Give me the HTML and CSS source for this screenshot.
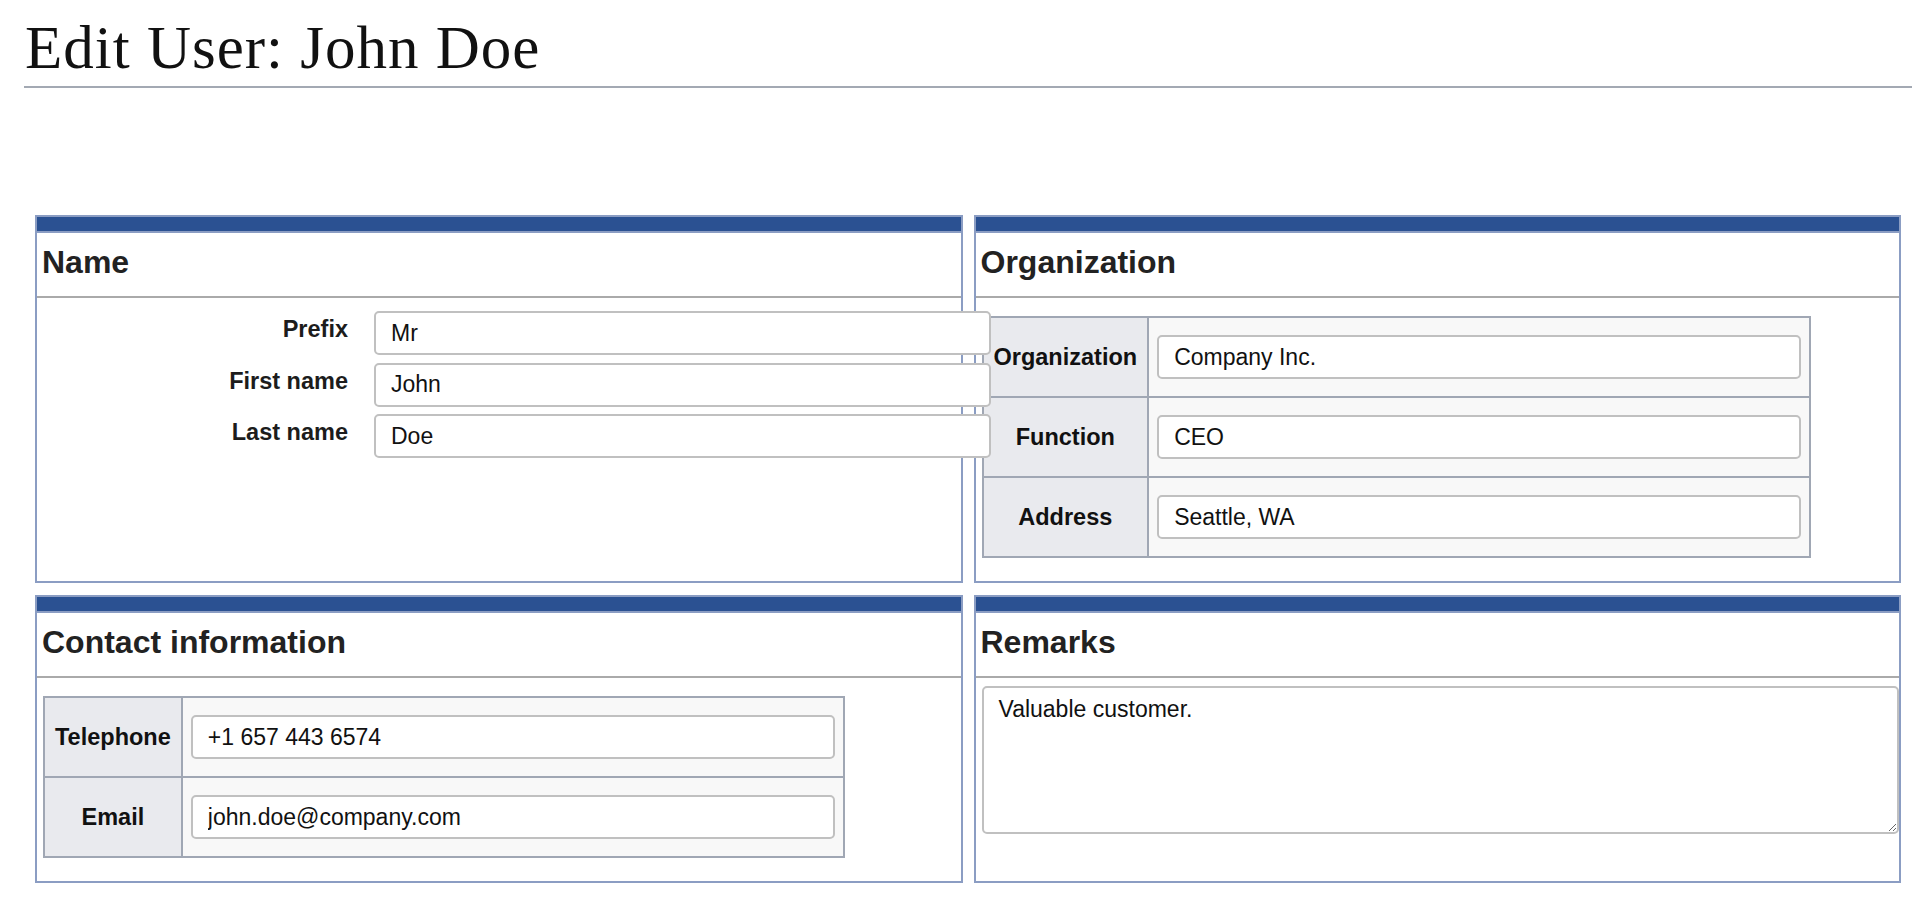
FILE: index.html
```html
<!DOCTYPE html>
<html lang="en">
<head>
<meta charset="utf-8">
<title>Edit User: John Doe</title>
<link rel="stylesheet" href="styles.css">
</head>
<body>
<div class="page">
  <h1 class="page-title">Edit User: John Doe</h1>
  <div class="panels">
    <section class="panel panel-name">
      <div class="panel-bar"></div>
      <h2 class="panel-title">Name</h2>
      <div class="panel-body panel-body-name">
        <div class="name-form">
          <label class="name-label">Prefix</label>
          <input class="field field-name" type="text" value="Mr">
          <label class="name-label">First name</label>
          <input class="field field-name" type="text" value="John">
          <label class="name-label">Last name</label>
          <input class="field field-name" type="text" value="Doe">
        </div>
      </div>
    </section>
    <section class="panel">
      <div class="panel-bar"></div>
      <h2 class="panel-title">Organization</h2>
      <div class="panel-body">
        <table class="info-table">
          <tr><th>Organization</th><td><input class="field field-wide" type="text" value="Company Inc."></td></tr>
          <tr><th>Function</th><td><input class="field field-wide" type="text" value="CEO"></td></tr>
          <tr><th>Address</th><td><input class="field field-wide" type="text" value="Seattle, WA"></td></tr>
        </table>
      </div>
    </section>
    <section class="panel">
      <div class="panel-bar"></div>
      <h2 class="panel-title">Contact information</h2>
      <div class="panel-body">
        <table class="info-table">
          <tr><th>Telephone</th><td><input class="field field-wide" type="text" value="+1 657 443 6574"></td></tr>
          <tr><th>Email</th><td><input class="field field-wide" type="text" value="john.doe@company.com"></td></tr>
        </table>
      </div>
    </section>
    <section class="panel">
      <div class="panel-bar"></div>
      <h2 class="panel-title">Remarks</h2>
      <div class="panel-body panel-body-remarks">
        <textarea class="remarks">Valuable customer.</textarea>
      </div>
    </section>
  </div>
</div>
</body>
</html>
```
FILE: styles.css
```css
html, body {
  margin: 0;
  padding: 0;
  background: #ffffff;
}

.page {
  padding: 0 16px 0 24px;
}

.page-title {
  margin: 13px 0 0;
  padding: 0 0 3px 1px;
  font-family: "Liberation Serif", "Times New Roman", serif;
  font-weight: 400;
  font-size: 61px;
  line-height: 70px;
  letter-spacing: 1px;
  color: #111111;
  border-bottom: 2px solid #a3a9b3;
}

.panels {
  display: grid;
  grid-template-columns: 1fr 1fr;
  column-gap: 11px;
  row-gap: 12px;
  margin: 127px 11px 0;
}

.panel {
  display: flex;
  flex-direction: column;
  min-width: 0;
  border: 2px solid #8b9dc3;
  background: #ffffff;
}

.panel-name {
  z-index: 1;
}

.panel-bar {
  height: 14px;
  background: #2b5192;
  border-bottom: 2px solid #8b9dc3;
}

.panel-title {
  margin: 0;
  height: 58px;
  padding: 0 0 5px 5px;
  font-family: "Liberation Sans", Arial, sans-serif;
  font-weight: 700;
  font-size: 32px;
  line-height: 58px;
  color: #222222;
  border-bottom: 2px solid #aaaaaa;
}

.panel-body {
  padding: 18px 0 23px 6px;
}

.panel-body-name {
  padding-top: 13px;
}

.panel-body-remarks {
  padding-top: 8px;
  padding-bottom: 0;
}

.name-form {
  display: grid;
  grid-template-columns: 305px 617px;
  column-gap: 26px;
  row-gap: 7.7px;
  align-items: start;
}

.name-label {
  padding-top: 5px;
  text-align: right;
  font-family: "Liberation Sans", Arial, sans-serif;
  font-weight: 700;
  font-size: 23.5px;
  color: #1c1c1c;
}

.field {
  display: block;
  box-sizing: border-box;
  height: 44px;
  margin: 0;
  padding: 0 15px;
  border: 2px solid #c0c0c0;
  border-radius: 5px;
  background: #ffffff;
  font-family: "Liberation Sans", Arial, sans-serif;
  font-size: 23px;
  color: #111111;
  outline: none;
}

.field-name {
  width: 617px;
}

.field-wide {
  width: 644px;
}

.info-table {
  border-collapse: collapse;
  border: 2px solid #a0a7b4;
}

.info-table th,
.info-table td {
  border: 2px solid #a0a7b4;
}

.info-table th {
  padding: 0 10px;
  background: #e9eaee;
  text-align: center;
  vertical-align: middle;
  font-family: "Liberation Sans", Arial, sans-serif;
  font-weight: 700;
  font-size: 23.5px;
  color: #111111;
}

.info-table td {
  padding: 17px 8px;
  background: #f8f8f8;
}

.remarks {
  display: block;
  box-sizing: border-box;
  width: 100%;
  height: 148px;
  margin: 0;
  padding: 8px 15px;
  border: 2px solid #c0c0c0;
  border-radius: 5px;
  background: #ffffff;
  font-family: "Liberation Sans", Arial, sans-serif;
  font-size: 23px;
  color: #111111;
  outline: none;
}
```
